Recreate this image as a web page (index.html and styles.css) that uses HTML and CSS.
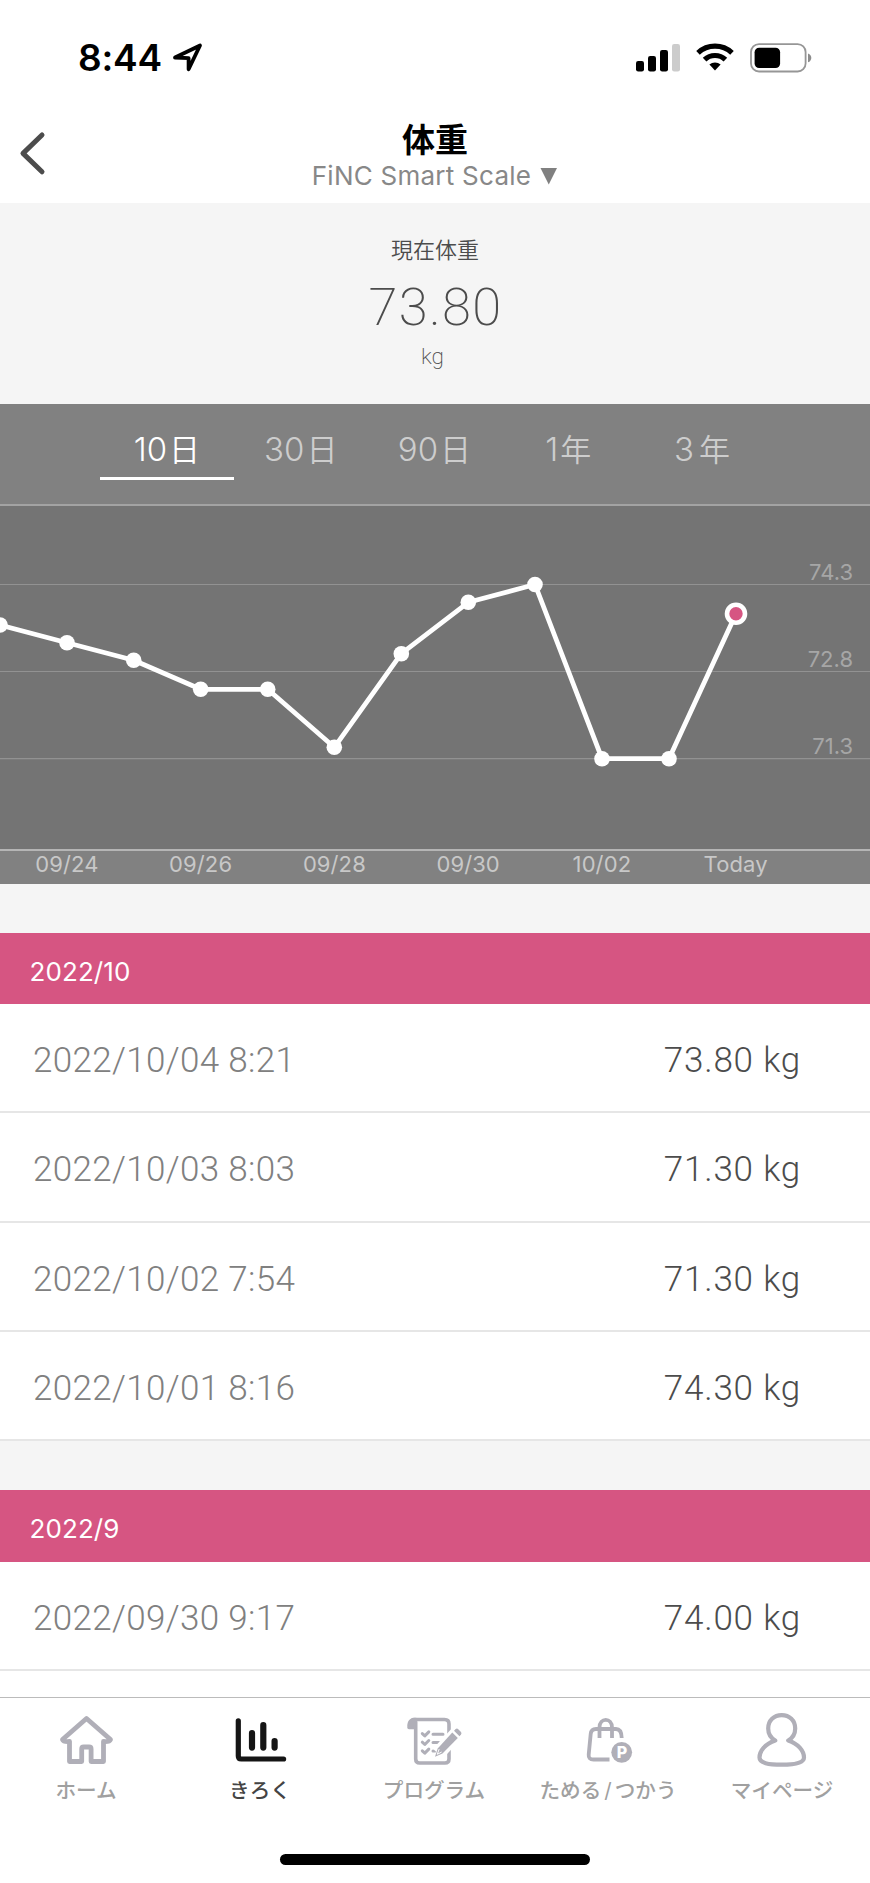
FILE: index.html
```html
<!DOCTYPE html>
<html lang="ja">
<head>
<meta charset="utf-8">
<title>体重</title>
<link rel="stylesheet" href="styles.css">
</head>
<body>
<div class="screen">
  <div class="status">
    <span class="time">8:44</span>
    <svg class="location" width="32" height="32" viewBox="0 0 32 32"><path d="M3 15.5 28 3.5 16.6 27.2V16.2Z" fill="none" stroke="#000" stroke-width="3.8" stroke-linejoin="round"/></svg>
    <svg class="signal" width="46" height="30" viewBox="0 0 46 30"><rect x="1" y="18" width="8" height="10.5" rx="2.2"/><rect x="13" y="13" width="8" height="15.5" rx="2.2"/><rect x="25" y="7" width="8" height="21.5" rx="2.2"/><rect x="37" y="1" width="8" height="27.5" rx="2.2" fill="#ccc"/></svg>
    <svg class="wifi" width="38" height="28" viewBox="0 0 38 28"><g fill="none" stroke="#000" stroke-width="5.2"><path d="M2 9.8A25 25 0 0 1 36 9.8"/><path d="M8.6 16.7A15 15 0 0 1 29.4 16.7"/></g><path d="M13.4 21.6A8.4 8.4 0 0 1 24.6 21.6L19 27.4Z"/></svg>
    <svg class="battery" width="62" height="30" viewBox="0 0 62 30"><rect x="1" y="1.1" width="54.6" height="27.4" rx="8" fill="none" stroke="#969696" stroke-width="1.8"/><rect x="4.6" y="4.8" width="25.5" height="20.2" rx="4.5"/><path d="M58 10.5C62.4 12 62.4 17.8 58 19.3Z" fill="#8c8c8c"/></svg>
  </div>

  <header class="header">
    <svg class="back" width="28" height="46" viewBox="0 0 28 46"><path d="M23 5 4 23.4 23 41.8" fill="none" stroke="#4c4c4c" stroke-width="5" stroke-linecap="round" stroke-linejoin="round"/></svg>
    <div class="titles">
      <h1 class="title">体重</h1>
      <div class="device"><span>FiNC Smart Scale</span><span class="caret"></span></div>
    </div>
  </header>

  <section class="summary">
    <div class="summary-label">現在体重</div>
    <div class="summary-value">73.80</div>
    <div class="summary-unit">kg</div>
  </section>

  <section class="chart">
    <nav class="ranges">
      <span class="range active">10<i>日</i></span>
      <span class="range">30<i>日</i></span>
      <span class="range">90<i>日</i></span>
      <span class="range">1<i>年</i></span>
      <span class="range wide">3<i>年</i></span>
    </nav>
    <svg class="plot" width="870" height="343" viewBox="0 506 870 343">
      <g stroke="#929292" stroke-width="1.2"><path d="M0 584.5H870M0 671.5H870M0 758.7H870"/></g>
      <g class="levels"><text x="853" y="579.5">74.3</text><text x="853" y="666.5">72.8</text><text x="853" y="753.5">71.3</text></g>
      <polyline points="0,625 67,642.7 133.7,660.3 200.7,689.3 267.7,689.3 334.3,747.3 401.3,653.7 468.3,602.3 535,584.5 602,758.7 669,758.7 736,613.7" fill="none" stroke="#fff" stroke-width="4.8" stroke-linejoin="round"/>
      <g fill="#fff"><circle cx="0" cy="625" r="7.8"/><circle cx="67" cy="642.7" r="7.8"/><circle cx="133.7" cy="660.3" r="7.8"/><circle cx="200.7" cy="689.3" r="7.8"/><circle cx="267.7" cy="689.3" r="7.8"/><circle cx="334.3" cy="747.3" r="7.8"/><circle cx="401.3" cy="653.7" r="7.8"/><circle cx="468.3" cy="602.3" r="7.8"/><circle cx="535" cy="584.5" r="7.8"/><circle cx="602" cy="758.7" r="7.8"/><circle cx="669" cy="758.7" r="7.8"/></g>
      <circle cx="736" cy="613.7" r="9" fill="#d65582" stroke="#fff" stroke-width="4.6"/>
    </svg>
    <div class="dates"><span>09/24</span><span>09/26</span><span>09/28</span><span>09/30</span><span>10/02</span><span>Today</span></div>
  </section>

  <section class="month">
    <h2 class="month-title">2022/10</h2>
    <div class="row"><span class="when">2022/10/04 8:21</span><span class="weight">73.80 kg</span></div>
    <div class="row"><span class="when">2022/10/03 8:03</span><span class="weight">71.30 kg</span></div>
    <div class="row"><span class="when">2022/10/02 7:54</span><span class="weight">71.30 kg</span></div>
    <div class="row"><span class="when">2022/10/01 8:16</span><span class="weight">74.30 kg</span></div>
  </section>
  <section class="month last">
    <h2 class="month-title">2022/9</h2>
    <div class="row"><span class="when">2022/09/30 9:17</span><span class="weight">74.00 kg</span></div>
  </section>

  <nav class="tabbar">
    <div class="tab">
      <svg class="icon" viewBox="0 0 60 60"><path d="M29.5 8.5 5.5 29.5Q6.5 32 12.5 31.5V51.5H24.7V39q0-2 2-2h5.4q2 0 2 2V51.5H46.5V31.5Q52.5 32 53.5 29.5Z" stroke-width="4.8"/></svg>
      <span>ホーム</span>
    </div>
    <div class="tab selected">
      <svg class="icon" viewBox="0 0 60 60"><path d="M7.3 10.8V46q0 3 3 3H52.6" stroke-width="5.2"/><path d="M21 23V37.6M32.3 15.2V37.6M43.6 31V37.6" stroke-width="6.2"/></svg>
      <span>きろく</span>
    </div>
    <div class="tab">
      <svg class="icon" viewBox="0 0 60 60"><path d="M8 9.500H39.500Q44 9.500 44 14V49Q44 53 40 53H14.700Q10.700 53 10.700 49V12" stroke-width="3.6"/><path class="solid" d="M10 7.700C5 7.700 2.300 11 2.300 15.500V17.500Q2.300 19.200 4 19.200H12V8Z"/><path d="M17.300 23.600l2.500 2.300 4-4M17.300 32.200l2.500 2.300 4-4M17.300 40.800l2.500 2.300 4-4" stroke-width="3"/><path d="M28 24.300H38M28 32.500H34M28 41H30" stroke-width="3"/><path d="M54 21 33 43.500" stroke="#fff" stroke-width="14" stroke-linecap="butt"/><path class="solid" d="M47.300 22.500 52.800 28 37.500 43.600 30 46.700 32.700 38.500Z"/><path class="solid" d="M49 20.800 50.700 19Q52 18 53.500 19.400L56 22Q57 23.300 56 24.500L54.500 26.200Z"/><path d="M34 39.500 32.300 44.300 36.300 42.200" stroke="#fff" stroke-width="1"/></svg>
      <span>プログラム</span>
    </div>
    <div class="tab">
      <svg class="icon" viewBox="0 0 60 60"><g stroke-width="3.8" stroke-linecap="butt"><path d="M30.500 49.500H14.500Q9.200 49.500 9.700 44.500L11.700 24Q12.200 19 17 19H37Q42.500 19 42.700 28"/><path d="M20.500 28V17.500C20.500 7.300 33 7.300 33 17.500V28"/></g><circle class="solid" cx="42.700" cy="42.300" r="10.400"/><text class="point" x="43" y="48">P</text></svg>
      <span class="slashed">ためる<b>/</b>つかう</span>
    </div>
    <div class="tab">
      <svg class="icon" viewBox="0 0 60 60"><path d="M22.300 30.500C17 27.500 15.200 23 15.200 18.500C15.200 10.500 21 5.200 28.700 5.200S42.200 10.500 42.200 18.500C42.200 23 40.500 27.500 35.200 30.500C45 33.500 51 41 51 47.500C51 53 42 54.700 28.700 54.700S6.500 53 6.500 47.500C6.500 41 12.500 33.500 22.300 30.500Z" stroke-width="4.200"/></svg>
      <span>マイページ</span>
    </div>
  </nav>
  <div class="home-bar"></div>
</div>
</body>
</html>
```
FILE: styles.css
```css
* { box-sizing: border-box; }
body {
  margin: 0;
  background: #fff;
  font-family: Inter, "Noto Sans CJK JP", sans-serif;
  color: #4c4c4c;
}
.screen {
  width: 870px;
  height: 1883px;
  overflow: hidden;
  display: flex;
  flex-direction: column;
}
h1, h2 { margin: 0; font-weight: 400; }

.status {
  height: 116px;
  flex: none;
  padding: 38px 58px 0 78px;
  display: flex;
  align-items: flex-start;
}
.time {
  width: 92px;
  line-height: 40px;
  font-size: 37px;
  font-weight: 600;
  letter-spacing: -0.2px;
  color: #000;
}
.location { margin: 4px 0 0 2px; }
.signal { margin: 5px 15px 0 auto; }
.wifi { margin: 5px 16px 0 0; }
.battery { margin-top: 5px; }

.header {
  height: 87px;
  flex: none;
  display: grid;
  grid-template-columns: 100px 1fr 100px;
}
.back { margin: 14px 0 0 19px; }
.titles { text-align: center; padding-top: 4px; }
.title {
  font-size: 33px;
  line-height: 40px;
  font-weight: 700;
  color: #000;
}
.device {
  margin-top: 1px;
  padding-right: 1px;
  display: flex;
  justify-content: center;
  align-items: center;
  gap: 9px;
  font-size: 26px;
  line-height: 30px;
  letter-spacing: 0.25px;
  color: #888;
}
.caret {
  width: 17px;
  height: 17px;
  background: #808080;
  clip-path: polygon(0 0, 100% 0, 50% 100%);
}

.summary {
  height: 201px;
  flex: none;
  padding-top: 32px;
  background: #f5f5f5;
  text-align: center;
}
.summary-label { font-size: 22px; line-height: 30px; font-weight: 350; }
.summary-value {
  margin-top: 12px;
  padding-left: 1px;
  font-family: Roboto, sans-serif;
  font-size: 52.500px;
  line-height: 60px;
  font-weight: 200;
  letter-spacing: 1.300px;
}
.summary-unit {
  margin-top: 4px;
  padding-right: 5px;
  font-family: Roboto, sans-serif;
  font-size: 22.500px;
  line-height: 30px;
  font-weight: 200;
}

.chart { height: 479.500px; flex: none; background: #818181; }
.ranges {
  height: 102px;
  padding: 0 101px 0 100px;
  display: flex;
  border-bottom: 2px solid #a3a3a3;
}
.range {
  flex: 1;
  height: 76px;
  padding-top: 20px;
  line-height: 50px;
  text-align: center;
  font-size: 33px;
  font-weight: 300;
  color: #cdcdcd;
}
.range i { font-style: normal; font-size: 31px; font-weight: 350; margin-left: 2px; }
.wide i { margin-left: 5px; }
.range.active { color: #fff; border-bottom: 3px solid #fff; }
.plot { display: block; background: #747474; }
.levels {
  fill: #a6a6a6;
  font-size: 22px;
  text-anchor: end;
}
.dates {
  height: 34.500px;
  border-top: 2px solid #b5b5b5;
  display: grid;
  grid-template-columns: repeat(6, 133.750px);
  text-align: center;
  font-size: 22px;
  line-height: 26px;
  letter-spacing: 0.1px;
  color: #c8c8c8;
}

.month {
  flex: none;
  padding-top: 49px;
  background: #f5f5f5;
}
.month-title {
  height: 71.500px;
  padding-left: 29.500px;
  background: #d65582;
  color: #fff;
  font-size: 26px;
  line-height: 77px;
  letter-spacing: 0.1px;
}
.row {
  height: 109.300px;
  padding: 0 69px 0 33px;
  display: flex;
  justify-content: space-between;
  background: #fff;
  border-bottom: 2px solid #e6e6e6;
  font-family: Roboto, sans-serif;
  font-size: 35px;
  line-height: 113px;
  font-weight: 300;
}
.when { color: #808080; letter-spacing: 0.330px; }
.weight { letter-spacing: 0.800px; }
.last { margin-bottom: 26px; }

.tabbar {
  height: 118px;
  flex: none;
  padding-top: 12px;
  border-top: 1.500px solid #bbb;
  display: grid;
  grid-template-columns: repeat(5, 174px);
}
.tab {
  display: flex;
  flex-direction: column;
  align-items: center;
  font-size: 20.600px;
  line-height: 30px;
  font-weight: 500;
  color: #a0a0a0;
}
.tab > span { margin-top: 6px; padding-right: 2px; }
.selected { color: #444; }
.icon {
  width: 60px;
  height: 60px;
  fill: none;
  stroke: #b0afb8;
  stroke-linecap: round;
  stroke-linejoin: round;
}
.selected .icon { stroke: #151515; }
.icon .solid { fill: #b0afb8; stroke: none; }
.point {
  fill: #fff;
  stroke: none;
  font-size: 16px;
  font-weight: 800;
  text-anchor: middle;
}
.slashed b { font-weight: 400; margin: 0 3px; }
.home-bar {
  width: 310px;
  height: 11px;
  margin: 39px auto 0;
  border-radius: 6px;
  background: #000;
  flex: none;
}
```
